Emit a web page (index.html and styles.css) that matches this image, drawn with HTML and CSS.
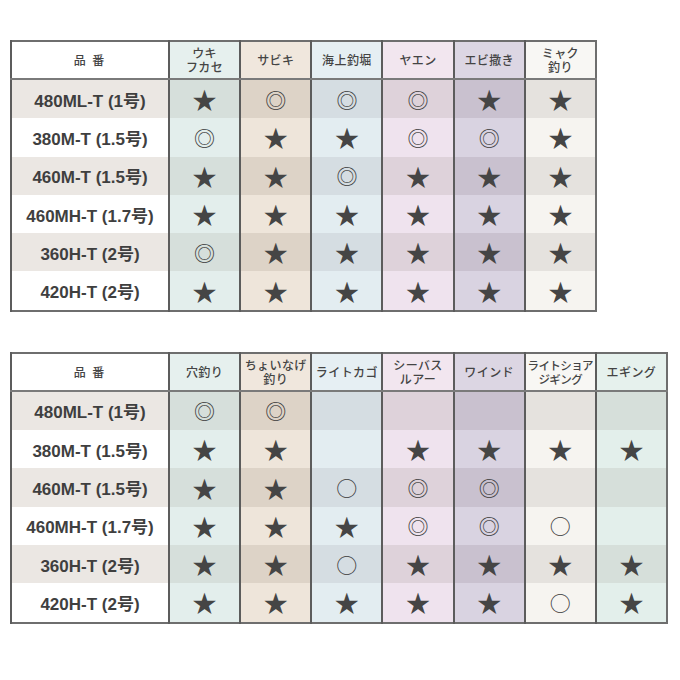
FILE: index.html
```html
<!DOCTYPE html>
<html lang="ja">
<head>
<meta charset="utf-8">
<link rel="stylesheet" href="styles.css">
</head>
<body>
<div class="page">
<table class="chart chart-top">
  <colgroup><col class="c-name"><col><col><col><col><col><col></colgroup>
  <thead>
    <tr>
      <th class="name">品 番</th>
      <th class="mint">ウキ<br>フカセ</th>
      <th class="beige">サビキ</th>
      <th class="blue">海上釣堀</th>
      <th class="pink">ヤエン</th>
      <th class="lav">エビ撒き</th>
      <th class="off">ミャク<br>釣り</th>
    </tr>
  </thead>
  <tbody>
    <tr class="odd"><td class="name">480ML-T (1号)</td><td class="mint star">★</td><td class="beige dbl">◎</td><td class="blue dbl">◎</td><td class="pink dbl">◎</td><td class="lav star">★</td><td class="off star">★</td></tr>
    <tr><td class="name">380M-T (1.5号)</td><td class="mint dbl">◎</td><td class="beige star">★</td><td class="blue star">★</td><td class="pink dbl">◎</td><td class="lav dbl">◎</td><td class="off star">★</td></tr>
    <tr class="odd"><td class="name">460M-T (1.5号)</td><td class="mint star">★</td><td class="beige star">★</td><td class="blue dbl">◎</td><td class="pink star">★</td><td class="lav star">★</td><td class="off star">★</td></tr>
    <tr><td class="name">460MH-T (1.7号)</td><td class="mint star">★</td><td class="beige star">★</td><td class="blue star">★</td><td class="pink star">★</td><td class="lav star">★</td><td class="off star">★</td></tr>
    <tr class="odd"><td class="name">360H-T (2号)</td><td class="mint dbl">◎</td><td class="beige star">★</td><td class="blue star">★</td><td class="pink star">★</td><td class="lav star">★</td><td class="off star">★</td></tr>
    <tr><td class="name">420H-T (2号)</td><td class="mint star">★</td><td class="beige star">★</td><td class="blue star">★</td><td class="pink star">★</td><td class="lav star">★</td><td class="off star">★</td></tr>
  </tbody>
</table>

<table class="chart chart-bottom">
  <colgroup><col class="c-name"><col><col><col><col><col><col><col></colgroup>
  <thead>
    <tr>
      <th class="name">品 番</th>
      <th class="mint">穴釣り</th>
      <th class="beige">ちょいなげ<br>釣り</th>
      <th class="blue">ライトカゴ</th>
      <th class="pink">シーバス<br>ルアー</th>
      <th class="lav">ワインド</th>
      <th class="off tight">ライトショア<br>ジギング</th>
      <th class="green">エギング</th>
    </tr>
  </thead>
  <tbody>
    <tr class="odd"><td class="name">480ML-T (1号)</td><td class="mint dbl">◎</td><td class="beige dbl">◎</td><td class="blue"></td><td class="pink"></td><td class="lav"></td><td class="off"></td><td class="green"></td></tr>
    <tr><td class="name">380M-T (1.5号)</td><td class="mint star">★</td><td class="beige star">★</td><td class="blue"></td><td class="pink star">★</td><td class="lav star">★</td><td class="off star">★</td><td class="green star">★</td></tr>
    <tr class="odd"><td class="name">460M-T (1.5号)</td><td class="mint star">★</td><td class="beige star">★</td><td class="blue sgl">○</td><td class="pink dbl">◎</td><td class="lav dbl">◎</td><td class="off"></td><td class="green"></td></tr>
    <tr><td class="name">460MH-T (1.7号)</td><td class="mint star">★</td><td class="beige star">★</td><td class="blue star">★</td><td class="pink dbl">◎</td><td class="lav dbl">◎</td><td class="off sgl">○</td><td class="green"></td></tr>
    <tr class="odd"><td class="name">360H-T (2号)</td><td class="mint star">★</td><td class="beige star">★</td><td class="blue sgl">○</td><td class="pink star">★</td><td class="lav star">★</td><td class="off star">★</td><td class="green star">★</td></tr>
    <tr><td class="name">420H-T (2号)</td><td class="mint star">★</td><td class="beige star">★</td><td class="blue star">★</td><td class="pink star">★</td><td class="lav star">★</td><td class="off sgl">○</td><td class="green star">★</td></tr>
  </tbody>
</table>
</div>
</body>
</html>
```

FILE: styles.css
```css
html, body {
  margin: 0;
  padding: 0;
  background: #ffffff;
}

.page {
  padding: 40px 0 0 10px;
  display: flex;
  flex-direction: column;
  align-items: flex-start;
  gap: 40px;
  font-family: "Liberation Sans", "Noto Sans CJK JP", sans-serif;
  color: #3d3d3d;
}

.chart {
  border-collapse: collapse;
  table-layout: fixed;
  border: 2px solid #6e6e6e;
}

.chart-top { width: 587px; }
.chart-bottom { width: 658px; }

.c-name { width: 158px; }

.chart th,
.chart td {
  padding: 0;
  text-align: center;
  vertical-align: middle;
  border-left: 2px solid #5c5c5c;
}

.chart th {
  height: 36px;
  font-family: "Noto Sans CJK JP", sans-serif;
  font-weight: 500;
  font-size: 12px;
  line-height: 14px;
  letter-spacing: 0.4px;
  color: #444;
  border-bottom: 2px solid #7a7a7a;
  white-space: nowrap;
}

.chart th.tight {
  letter-spacing: -0.6px;
  font-size: 11.5px;
}

.chart th.name {
  letter-spacing: 2px;
  background: #ffffff;
}

.chart td {
  height: 38.3px;
}

.chart td.name {
  font-weight: 700;
  font-size: 17px;
  color: #3f3f3f;
  background: #ffffff;
  white-space: nowrap;
}

.chart tr.odd td.name { background: #ebe7e3; }

.star {
  font-family: "Noto Sans CJK JP", sans-serif;
  font-size: 24px;
  line-height: 1;
  color: #454545;
}

.dbl,
.sgl {
  font-family: "Noto Sans CJK JP", sans-serif;
  font-size: 21px;
  line-height: 1;
  color: #3a3a3a;
}

/* column tints */
th.mint { background: #e6f0ee; }
td.mint { background: #e3eeec; }
tr.odd td.mint { background: #d6dfdb; }

th.beige { background: #f0e7dd; }
td.beige { background: #eee5da; }
tr.odd td.beige { background: #ddd3c7; }

th.blue { background: #e6eff3; }
td.blue { background: #e3edf1; }
tr.odd td.blue { background: #d5dde2; }

th.pink { background: #f2e6ef; }
td.pink { background: #efe3ee; }
tr.odd td.pink { background: #ded2da; }

th.lav { background: #dcd6e3; }
td.lav { background: #d9d3e1; }
tr.odd td.lav { background: #c9c1cf; }

th.off { background: #f8f7f4; }
td.off { background: #f6f4f0; }
tr.odd td.off { background: #e5e2de; }

th.green { background: #e6f1ed; }
td.green { background: #e3efeb; }
tr.odd td.green { background: #d6dfda; }
```
